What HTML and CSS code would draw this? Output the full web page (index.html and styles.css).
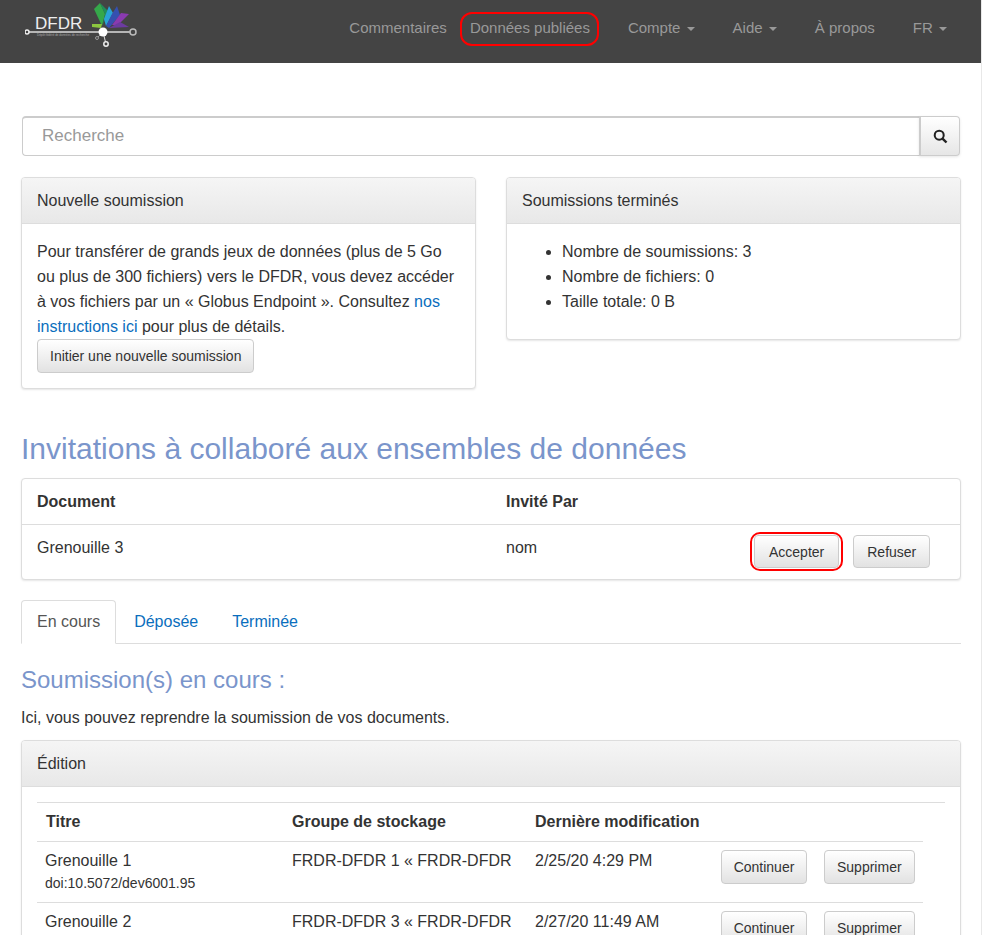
FILE: index.html
```html
<!DOCTYPE html>
<html lang="fr">
<head>
    <meta charset="UTF-8">
    <title>DFDR</title>
    <link rel="stylesheet" href="styles.css">
</head>
<body>
    <nav class="navbar">
        <a class="brand" href="#">
            <svg width="115" height="50" viewBox="0 0 115 50">
                <polygon points="69,9 75,3 80,14 77,26" fill="#35a84a"/>
                <polygon points="75,3 83,11 78,25 80,14" fill="#1f8f5a"/>
                <polygon points="67,24 77,24 76,28 67,27" fill="#8cc63f"/>
                <polygon points="79,19 84,6 88,13 81,26" fill="#29a3d6"/>
                <polygon points="81,26 87,14 92,6 95,15 84,28" fill="#3550b0"/>
                <polygon points="87,25 96,13 104,14 93,25" fill="#8a3ab0"/>
                <polygon points="84,28 95,22 104,27" fill="#6c3ba0"/>
                <line x1="2" y1="32" x2="108" y2="32" stroke="#ddd" stroke-width="1.5"/>
                <circle cx="2" cy="32" r="2" fill="#444" stroke="#eee" stroke-width="1.5"/>
                <line x1="78" y1="32" x2="81" y2="44" stroke="#ddd"/>
                <line x1="78" y1="32" x2="72" y2="38" stroke="#999"/>
                <circle cx="78" cy="32" r="4.5" fill="#fff"/>
                <circle cx="108" cy="32" r="3" fill="#444" stroke="#bbb" stroke-width="1.5"/>
                <circle cx="81" cy="44" r="2.2" fill="#444" stroke="#eee" stroke-width="1.5"/>
                <circle cx="72" cy="38" r="1.5" fill="#444" stroke="#999"/>
                <text x="10" y="29" class="brand-name">DFDR</text>
                <text x="12" y="36" class="brand-tag">Dépôt fédéré de données de recherche</text>
            </svg>
        </a>
        <ul class="nav-links">
            <li class="nav-first"><a href="#">Commentaires</a></li>
            <li class="nav-ringed"><a href="#">Données publiées</a></li>
            <li><a href="#">Compte <span class="caret"></span></a></li>
            <li><a href="#">Aide <span class="caret"></span></a></li>
            <li><a href="#">À propos</a></li>
            <li><a href="#">FR <span class="caret"></span></a></li>
        </ul>
    </nav>

    <main class="container">
        <div class="search">
            <input class="search-input" type="text" placeholder="Recherche">
            <button class="search-btn" aria-label="Recherche">
                <svg width="15" height="15" viewBox="0 0 14 14">
                    <circle cx="5.8" cy="5.8" r="4.2" fill="none" stroke="#222" stroke-width="1.9"/>
                    <line x1="8.9" y1="8.9" x2="12.6" y2="12.6" stroke="#222" stroke-width="2.3"/>
                </svg>
            </button>
        </div>

        <div class="columns">
            <section class="panel">
                <div class="panel-head">Nouvelle soumission</div>
                <div class="panel-body">
                    <p>Pour transférer de grands jeux de données (plus de 5 Go ou plus de 300 fichiers) vers le DFDR, vous devez accéder à vos fichiers par un « Globus Endpoint ». Consultez <a href="#">nos instructions ici</a> pour plus de détails.</p>
                    <button class="btn">Initier une nouvelle soumission</button>
                </div>
            </section>
            <section class="panel">
                <div class="panel-head">Soumissions terminés</div>
                <div class="panel-body">
                    <ul class="stats">
                        <li>Nombre de soumissions: 3</li>
                        <li>Nombre de fichiers: 0</li>
                        <li>Taille totale: 0 B</li>
                    </ul>
                </div>
            </section>
        </div>

        <h1 class="title">Invitations à collaboré aux ensembles de données</h1>
        <section class="panel invites">
            <div class="invite-row invite-head">
                <div class="invite-doc">Document</div>
                <div>Invité Par</div>
            </div>
            <div class="invite-row">
                <div class="invite-doc">Grenouille 3</div>
                <div class="invite-by">nom</div>
                <div class="invite-actions">
                    <span class="ring"><button class="btn btn-big">Accepter</button></span>
                    <button class="btn btn-big">Refuser</button>
                </div>
            </div>
        </section>

        <ul class="tabs">
            <li class="tab active">En cours</li>
            <li class="tab"><a href="#">Déposée</a></li>
            <li class="tab"><a href="#">Terminée</a></li>
        </ul>

        <h3 class="subtitle">Soumission(s) en cours :</h3>
        <p class="intro">Ici, vous pouvez reprendre la soumission de vos documents.</p>

        <section class="panel">
            <div class="panel-head">Édition</div>
            <div class="panel-body">
                <div class="subs-wrap">
                    <table class="subs">
                        <thead>
                            <tr>
                                <th class="col-title">Titre</th>
                                <th class="col-group">Groupe de stockage</th>
                                <th class="col-date">Dernière modification</th>
                                <th></th>
                            </tr>
                        </thead>
                        <tbody>
                            <tr>
                                <td>Grenouille 1<div class="doi">doi:10.5072/dev6001.95</div></td>
                                <td>FRDR-DFDR 1 « FRDR-DFDR</td>
                                <td>2/25/20 4:29 PM</td>
                                <td class="row-actions"><button class="btn">Continuer</button><button class="btn">Supprimer</button></td>
                            </tr>
                            <tr>
                                <td>Grenouille 2</td>
                                <td>FRDR-DFDR 3 « FRDR-DFDR</td>
                                <td>2/27/20 11:49 AM</td>
                                <td class="row-actions"><button class="btn">Continuer</button><button class="btn">Supprimer</button></td>
                            </tr>
                        </tbody>
                    </table>
                </div>
            </div>
        </section>
    </main>
</body>
</html>
```

FILE: styles.css
```css
* {
    box-sizing: border-box;
}

html, body {
    height: 935px;
    overflow: hidden;
}

body {
    margin: 0;
    background-color: #fff;
    border-right: 1px solid #e8e8e8;
    color: #333;
    font-family: "Liberation Sans", Arial, sans-serif;
    font-size: 16px;
    line-height: 25px;
}

a {
    color: #0a6ebd;
    text-decoration: none;
}

/* Barre de navigation */
.navbar {
    display: flex;
    justify-content: space-between;
    height: 63px;
    padding: 0 15px 0 25px;
    background-color: #444;
}

.brand {
    display: block;
    height: 50px;
}

.brand-name {
    fill: #eee;
    font-size: 17px;
}

.brand-tag {
    fill: #aaa;
    font-size: 3px;
}

.nav-links {
    display: flex;
    margin: 0;
    padding: 0;
    list-style: none;
}

.nav-links li {
    margin: 0 5px;
}

.nav-links a {
    display: block;
    padding: 16px 14px 0;
    color: #999;
    font-size: 15px;
    line-height: 24px;
    white-space: nowrap;
}

.nav-links .nav-first {
    margin-right: 0;
}

.nav-links .nav-ringed {
    margin: 0 10px 0 -1px;
}

.nav-links .nav-ringed a {
    width: 139px;
    height: 34px;
    margin-top: 12px;
    padding: 2px 0 0 8px;
    border: 2px solid #f00;
    border-radius: 12px;
}

.caret {
    display: inline-block;
    margin-left: 2px;
    vertical-align: middle;
    border-top: 4px solid;
    border-left: 4px solid transparent;
    border-right: 4px solid transparent;
}

/* Contenu */
.container {
    padding: 53px 20px 0 21px;
}

.search {
    display: flex;
    height: 40px;
    margin: 0 1px 21px 1px;
}

.search-input {
    flex: 1;
    min-width: 0;
    padding: 0 19px 2px;
    border: 1px solid #ccc;
    border-top-width: 2px;
    border-right: 0;
    border-radius: 4px 0 0 4px;
    color: #333;
    font-family: inherit;
    font-size: 17px;
}

.search-input::placeholder {
    color: #999;
}

.search-btn {
    width: 41px;
    padding: 3px 0 0;
    border: 1px solid #ccc;
    border-left-width: 2px;
    border-radius: 0 4px 4px 0;
    background: linear-gradient(#fff, #e6e6e6);
    box-shadow: 0 1px 3px rgba(0,0,0,0.1);
}

.columns {
    display: grid;
    grid-template-columns: 455px 455px;
    justify-content: space-between;
    align-items: start;
}

.panel {
    border: 1px solid #ddd;
    border-radius: 4px;
    background-color: #fff;
    box-shadow: 0 1px 2px rgba(0,0,0,0.1);
}

.panel-head {
    height: 46px;
    padding: 10px 15px;
    border-bottom: 1px solid #ddd;
    border-radius: 3px 3px 0 0;
    background: linear-gradient(#f5f5f5, #e8e8e8);
}

.panel-body {
    padding: 15px;
}

.panel-body p {
    margin: 0;
}

.stats {
    margin: 0 0 10px;
    padding-left: 40px;
}

.btn {
    height: 34px;
    padding: 0 12px;
    border: 1px solid #ccc;
    border-radius: 4px;
    background: linear-gradient(#fff, #e2e2e2);
    color: #333;
    font-family: inherit;
    font-size: 14px;
}

.title {
    margin: 43px 0 13px;
    color: #7a95cb;
    font-size: 30px;
    font-weight: 400;
    line-height: 33px;
}

.invites {
    margin-bottom: 20px;
}

.invite-row {
    display: flex;
    align-items: flex-start;
    height: 54px;
    padding: 10px 15px;
}

.invite-head {
    height: 46px;
    border-bottom: 1px solid #ddd;
    font-weight: 700;
}

.invite-doc {
    width: 469px;
}

.invite-by {
    width: 244px;
}

.invite-actions {
    display: flex;
    align-items: flex-start;
    gap: 10px;
}

.btn-big {
    display: block;
    height: 33px;
    padding: 0 13px;
}

.ring {
    display: block;
    margin-top: -3px;
    padding: 1px 2px;
    border: 2px solid #f00;
    border-radius: 10px;
}

.ring .btn-big {
    padding: 0 14px;
}

/* Onglets */
.tabs {
    display: flex;
    height: 44px;
    margin: 0;
    padding: 0;
    border-bottom: 1px solid #ddd;
    list-style: none;
}

.tab {
    height: 44px;
    padding: 8px 15px;
    border: 1px solid transparent;
    margin-right: 2px;
}

.tab.active {
    border-color: #ddd #ddd #fff;
    border-radius: 4px 4px 0 0;
    background-color: #fff;
    color: #555;
}

.subtitle {
    margin: 21px 0 10px;
    color: #7a95cb;
    font-size: 24px;
    font-weight: 400;
    line-height: 30px;
}

.intro {
    margin: 0 0 10px;
}

/* Tableau des soumissions */
.subs-wrap {
    border-top: 1px solid #ddd;
}

.subs {
    width: 886px;
    border-collapse: collapse;
    table-layout: fixed;
}

.subs th,
.subs td {
    padding: 6px 8px;
    text-align: left;
    vertical-align: top;
    border-bottom: 1px solid #ddd;
}

.subs th {
    height: 38px;
    font-weight: 700;
}

.subs th:first-child {
    padding-left: 9px;
}

.subs td {
    height: 61px;
}

.col-title {
    width: 247px;
}

.col-group {
    width: 243px;
}

.col-date {
    width: 186px;
}

.doi {
    font-size: 14px;
    line-height: 20px;
}

.subs .row-actions {
    padding-top: 8px;
    white-space: nowrap;
}

.row-actions .btn:first-child {
    width: 86px;
    padding: 0;
}

.row-actions .btn + .btn {
    margin-left: 17px;
}
```
